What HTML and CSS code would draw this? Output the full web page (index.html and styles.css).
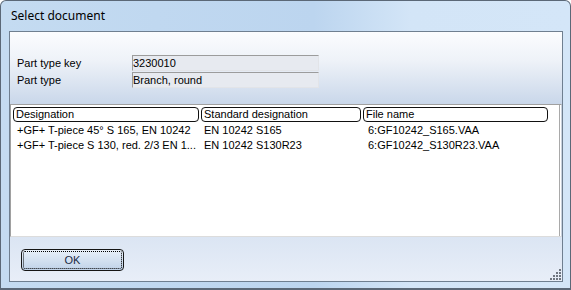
FILE: index.html
```html
<!DOCTYPE html>
<html>
<head>
<meta charset="utf-8">
<link rel="stylesheet" href="styles.css">
</head>
<body>
<div class="window">
  <div class="titlebar"><span class="title">Select document</span></div>
  <div class="client">
    <div class="info">
      <div class="field"><span class="label">Part type key</span><span class="value">3230010</span></div>
      <div class="field"><span class="label">Part type</span><span class="value">Branch, round</span></div>
    </div>
    <div class="list">
      <div class="list-inner">
        <div class="headers">
          <div class="hdr c1">Designation</div>
          <div class="hdr c2">Standard designation</div>
          <div class="hdr c3">File name</div>
        </div>
        <div class="row">
          <div class="cell c1">+GF+ T-piece 45° S 165, EN 10242</div>
          <div class="cell c2">EN 10242 S165</div>
          <div class="cell c3">6:GF10242_S165.VAA</div>
        </div>
        <div class="row">
          <div class="cell c1">+GF+ T-piece S 130, red. 2/3 EN 1...</div>
          <div class="cell c2">EN 10242 S130R23</div>
          <div class="cell c3">6:GF10242_S130R23.VAA</div>
        </div>
      </div>
    </div>
    <div class="footer">
      <button class="ok"><span class="focus">OK</span></button>
      <svg class="grip" width="14" height="14" viewBox="0 0 14 14">
        <g fill="#6f7680">
          <rect x="11" y="2" width="2" height="2"/>
          <rect x="8" y="5" width="2" height="2"/><rect x="11" y="5" width="2" height="2"/>
          <rect x="5" y="8" width="2" height="2"/><rect x="8" y="8" width="2" height="2"/><rect x="11" y="8" width="2" height="2"/>
          <rect x="2" y="11" width="2" height="2"/><rect x="5" y="11" width="2" height="2"/><rect x="8" y="11" width="2" height="2"/><rect x="11" y="11" width="2" height="2"/>
        </g>
      </svg>
    </div>
  </div>
</div>
</body>
</html>
```

FILE: styles.css
```css
html, body {
  margin: 0;
  padding: 0;
  background: #ffffff;
}
.window {
  width: 569px;
  height: 287px;
  border: 1px solid #5b6877;
  border-bottom-width: 2px;
  border-radius: 6px 6px 0 0;
  background: linear-gradient(to right, #c4dbf1 0%, #bcd5ef 55%, #d3e5f7 72%, #d4e6f8 100%);
  display: flex;
  flex-direction: column;
  overflow: hidden;
  font-family: "Liberation Sans", Arial, sans-serif;
  font-size: 11px;
  color: #000;
}
.titlebar {
  height: 30px;
  display: flex;
  align-items: center;
  padding-left: 10px;
  padding-bottom: 1px;
  box-sizing: border-box;
}
.title {
  font-family: "Noto Sans", sans-serif;
  font-size: 12px;
  color: #000;
}
.client {
  margin: 0 7px 0 8px;
  height: 249px;
  border: 1px solid #6f7f90;
  display: flex;
  flex-direction: column;
  background: #e4ebf6;
}
.info {
  height: 72px;
  background: linear-gradient(to bottom, #fbfcfe 0%, #eef2f8 40%, #c9d7ea 100%);
  padding: 23px 0 0 7px;
  box-sizing: border-box;
  display: flex;
  flex-direction: column;
}
.field {
  display: flex;
  align-items: center;
  height: 16px;
  margin-bottom: 1px;
}
.label {
  width: 115px;
}
.value {
  width: 185px;
  height: 14px;
  line-height: 14px;
  border: 1px solid;
  border-color: #9c9c9c #e2e4e8 #e2e4e8 #9c9c9c;
  background: #e7eaf0;
  white-space: nowrap;
}
.list {
  height: 133px;
  border-top: 1px solid #a0a0a0;
  border-left: 1px solid #a0a0a0;
  border-right: 1px solid #c9d2de;
  border-bottom: 1px solid #dcdcdc;
  background: #ffffff;
  box-sizing: border-box;
  display: flex;
}
.list-inner {
  flex: 1;
  border-right: 1px solid #a9a9a9;
  margin-right: 1px;
  padding: 2px 0 0 2px;
}
.headers {
  display: flex;
  gap: 2px;
  height: 15px;
}
.hdr {
  border: 1px solid #111;
  border-radius: 4px;
  box-sizing: border-box;
  height: 15px;
  line-height: 13px;
  padding-left: 2px;
  white-space: nowrap;
  overflow: hidden;
}
.hdr.c1 { width: 186px; }
.hdr.c2 { width: 160px; }
.hdr.c3 { width: 185px; }
.row {
  display: flex;
  height: 15px;
  line-height: 15px;
  white-space: nowrap;
}
.headers + .row { margin-top: 1px; }
.cell.c1 { width: 187px; padding-left: 4px; box-sizing: border-box; }
.cell.c2 { width: 163px; padding-left: 4px; box-sizing: border-box; }
.cell.c3 { width: 180px; padding-left: 5px; box-sizing: border-box; }
.footer {
  flex: 1;
  background: linear-gradient(to bottom, #dbe5f3 0%, #e8eef8 100%);
  display: flex;
  align-items: flex-start;
  justify-content: space-between;
  padding: 12px 0 0 11px;
  position: relative;
}
.ok {
  width: 103px;
  height: 22px;
  border: 1px solid #151515;
  border-radius: 4px;
  background: linear-gradient(to bottom, #e9f0f9 0%, #d4e1f1 50%, #c0d2e9 100%);
  padding: 1px;
  margin: 0;
  font-family: "Liberation Sans", Arial, sans-serif;
  font-size: 11px;
  color: #1a2a44;
  display: flex;
}
.focus {
  flex: 1;
  border: 1px dotted #000;
  border-radius: 2px;
  display: flex;
  align-items: center;
  justify-content: center;
}
.grip {
  position: absolute;
  right: 0;
  bottom: 0;
}
```
